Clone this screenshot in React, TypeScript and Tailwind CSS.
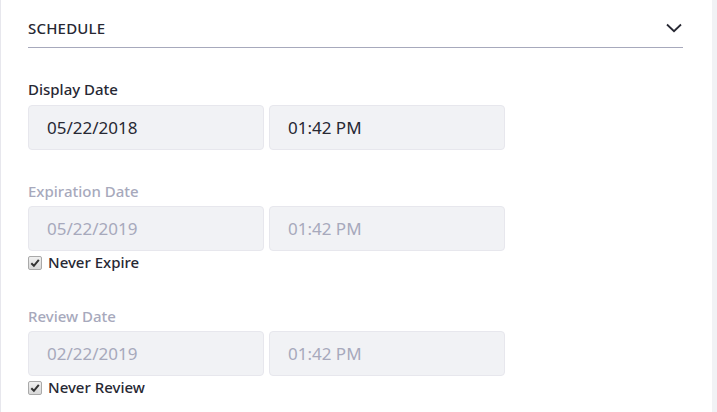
import React from 'react';

function DateRow({ date, time, disabled }: { date: string; time: string; disabled?: boolean }) {
  const text = disabled ? 'text-[#a7a9bc]' : 'text-[#272833]';
  return (
    <div className="flex gap-[5px]">
      <div className={`flex h-[45px] w-[236px] items-center rounded-[4px] border border-[#e7e7ed] bg-[#f1f2f5] pl-[18px] text-[17px] ${text}`}>
        {date}
      </div>
      <div className={`flex h-[45px] w-[236px] items-center rounded-[4px] border border-[#e7e7ed] bg-[#f1f2f5] pl-[18px] text-[17px] ${text}`}>
        {time}
      </div>
    </div>
  );
}

function Checked({ label }: { label: string }) {
  return (
    <label className="mt-[3px] flex h-[17px] items-center gap-[6px]">
      <span className="flex h-[14px] w-[14px] items-center justify-center rounded-[2px] border border-[#a9a9a9] bg-gradient-to-b from-[#f0f0f0] to-[#d8d8d8]">
        <svg width="10" height="10" viewBox="0 0 10 10">
          <path d="M1.3 5.2 L3.9 7.8 L8.8 1.8" fill="none" stroke="#333" strokeWidth="2" />
        </svg>
      </span>
      <span className="text-[15px] font-medium text-[#272833]">{label}</span>
    </label>
  );
}

export default function App() {
  return (
    <div className="flex h-[412px] w-[717px] bg-white" style={{ fontFamily: '"Noto Sans", "Open Sans", sans-serif' }}>
      <div className="flex-1 border-l border-[#e7e7ed] pl-[27px] pr-[29px]">
        {/* Header */}
        <div className="flex h-[48px] items-end border-b border-[#a7a9bc] pb-[8px]">
          <div className="flex h-[22px] flex-1 items-center justify-between">
            <span className="text-[15px] font-medium tracking-[0.2px] text-[#272833]">SCHEDULE</span>
            <svg width="16" height="10" viewBox="0 0 16 10" className="mr-[1px]">
              <path d="M1 1.5 L8 8.2 L15 1.5" fill="none" stroke="#272833" strokeWidth="1.8" />
            </svg>
          </div>
        </div>

        {/* Display Date */}
        <div className="mt-[32px]">
          <div className="mb-[5px] h-[20px] text-[15px] font-medium leading-[18px] text-[#272833]">Display Date</div>
          <DateRow date="05/22/2018" time="01:42 PM" />
        </div>

        {/* Expiration Date */}
        <div className="mt-[32px]">
          <div className="mb-[4px] h-[20px] text-[15px] font-medium leading-[18px] text-[#a7a9bc]">Expiration Date</div>
          <DateRow date="05/22/2019" time="01:42 PM" disabled />
          <Checked label="Never Expire" />
        </div>

        {/* Review Date */}
        <div className="mt-[36px]">
          <div className="mb-[4px] h-[20px] text-[15px] font-medium leading-[18px] text-[#a7a9bc]">Review Date</div>
          <DateRow date="02/22/2019" time="01:42 PM" disabled />
          <Checked label="Never Review" />
        </div>
      </div>
      <div className="w-[5px] bg-[#f1f2f5]" />
    </div>
  );
}
